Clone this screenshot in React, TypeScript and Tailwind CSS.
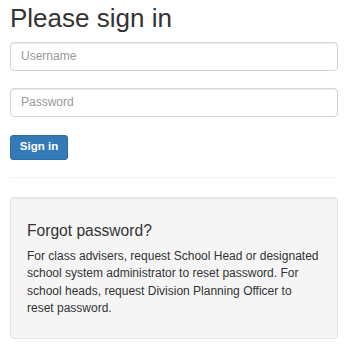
import React from 'react';

export default function App() {
  return (
    <div className="min-h-[354px] bg-white pl-[10px] pr-[14px] text-[#333]" style={{ fontFamily: '"Liberation Sans", Arial, sans-serif' }}>
      <h2 className="pt-[4px] text-[26px] leading-[1.1] font-normal">Please sign in</h2>

      <form className="mt-[9px]" onSubmit={e => e.preventDefault()}>
        <div className="mb-[17px]">
          <input
            type="text"
            placeholder="Username"
            className="block h-[29px] w-full rounded-[4px] border border-[#d4d4d4] px-[10px] text-[12px] text-[#555] shadow-[inset_0_1px_1px_rgba(0,0,0,0.075)] outline-none placeholder:text-[#999]"
          />
        </div>
        <div className="mb-[18px]">
          <input
            type="password"
            placeholder="Password"
            className="block h-[29px] w-full rounded-[4px] border border-[#d4d4d4] px-[10px] text-[12px] text-[#555] shadow-[inset_0_1px_1px_rgba(0,0,0,0.075)] outline-none placeholder:text-[#999]"
          />
        </div>
        <button
          type="submit"
          className="block h-[25px] w-[58px] rounded-[3px] border border-[#2e6da4] bg-[#337ab7] text-[11.5px] font-bold text-white"
        >
          Sign in
        </button>
      </form>

      <hr className="my-[17px] border-t border-[#f2f2f2]" />

      {/* Forgot password well */}
      <div className="mt-[19px] rounded-[4px] border border-[#e3e3e3] bg-[#f5f5f5] px-[16px] pt-[24px] pb-[21px] shadow-[inset_0_1px_1px_rgba(0,0,0,0.05)]">
        <h4 className="text-[15.6px] leading-[1.1] font-normal">Forgot password?</h4>
        <p className="mt-[9px] text-[12px] leading-[17.4px]">
          For class advisers, request School Head or designated school system administrator to reset password. For school heads, request Division Planning Officer to reset password.
        </p>
      </div>
    </div>
  );
}
